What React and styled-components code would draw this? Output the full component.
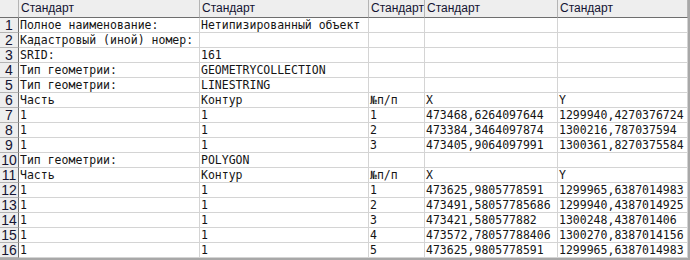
import React from "react";
import styled, { createGlobalStyle } from "styled-components";

const GlobalStyle = createGlobalStyle`
  html, body {
    margin: 0;
    padding: 0;
    background: #ffffff;
  }
`;

const COLUMNS = [181, 169, 56, 133, 130];

const rows = [
  ["Полное наименование:", "Нетипизированный объект", "", "", ""],
  ["Кадастровый (иной) номер:", "", "", "", ""],
  ["SRID:", "161", "", "", ""],
  ["Тип геометрии:", "GEOMETRYCOLLECTION", "", "", ""],
  ["Тип геометрии:", "LINESTRING", "", "", ""],
  ["Часть", "Контур", "№п/п", "X", "Y"],
  ["1", "1", "1", "473468,6264097644", "1299940,4270376724"],
  ["1", "1", "2", "473384,3464097874", "1300216,787037594"],
  ["1", "1", "3", "473405,9064097991", "1300361,8270375584"],
  ["Тип геометрии:", "POLYGON", "", "", ""],
  ["Часть", "Контур", "№п/п", "X", "Y"],
  ["1", "1", "1", "473625,9805778591", "1299965,6387014983"],
  ["1", "1", "2", "473491,58057785686", "1299940,4387014925"],
  ["1", "1", "3", "473421,580577882", "1300248,438701406"],
  ["1", "1", "4", "473572,78057788406", "1300270,8387014156"],
  ["1", "1", "5", "473625,9805778591", "1299965,6387014983"],
];

const App = () => {
  return (
    <>
      <GlobalStyle />
      <Sheet>
        <Corner />
        {COLUMNS.map((w, i) => (
          <ColHeader key={`h${i}`}>Стандарт</ColHeader>
        ))}
        {rows.map((row, r) => (
          <React.Fragment key={r}>
            <RowHeader>{r + 1}</RowHeader>
            {row.map((val, c) => (
              <Cell key={c}>{val}</Cell>
            ))}
          </React.Fragment>
        ))}
      </Sheet>
    </>
  );
};

const Sheet = styled.div`
  display: grid;
  grid-template-columns: 19px ${COLUMNS.map((w) => `${w}px`).join(" ")};
  grid-template-rows: 18px repeat(16, 15px);
  width: 688px;
  height: 258px;
  border-right: 2px solid #a8a8a8;
  border-bottom: 2px solid #a8a8a8;
  box-sizing: content-box;
  background: #ffffff;
`;

const Corner = styled.div`
  background: #eeeeee;
  border-right: 1px solid #b4b4b4;
  border-bottom: 1px solid #6e6e6e;
  box-sizing: border-box;
`;

const ColHeader = styled.div`
  background: #eeeeee;
  border-right: 1px solid #b4b4b4;
  border-bottom: 1px solid #6e6e6e;
  box-sizing: border-box;
  font-family: "Liberation Sans", Arial, sans-serif;
  font-size: 12px;
  line-height: 17px;
  color: #141432;
  padding-left: 2px;
  white-space: nowrap;
  overflow: hidden;
`;

const RowHeader = styled.div`
  background: #eeeeee;
  border-right: 1px solid #6e6e6e;
  border-bottom: 1px solid #b4b4b4;
  box-sizing: border-box;
  font-family: "Liberation Sans", Arial, sans-serif;
  font-size: 14px;
  line-height: 15px;
  height: 15px;
  text-align: center;
  color: #141432;
`;

const Cell = styled.div`
  border-right: 1px solid #d4d4d4;
  border-bottom: 1px solid #d4d4d4;
  box-sizing: border-box;
  font-family: "DejaVu Sans Mono", "Liberation Mono", monospace;
  font-size: 11.5px;
  line-height: 14px;
  color: #141414;
  padding-left: 1px;
  white-space: nowrap;
  overflow: visible;
`;

export default App;
